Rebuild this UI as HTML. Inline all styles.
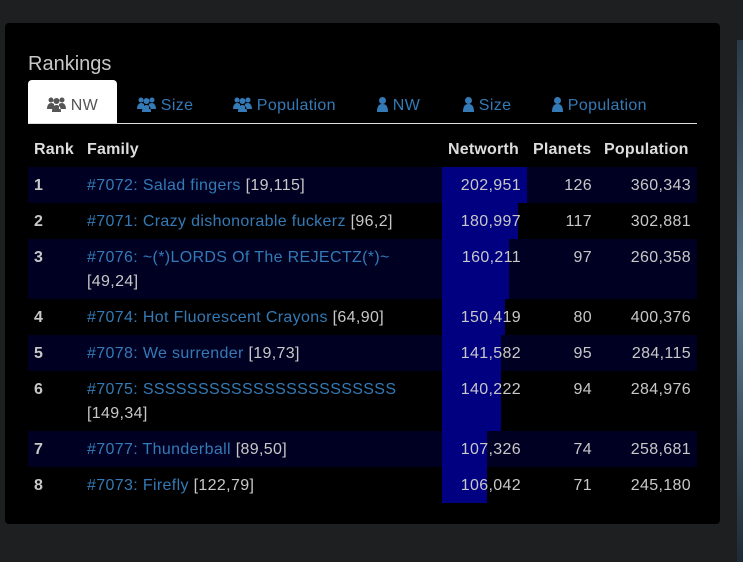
<!DOCTYPE html><html><head><style>
body{margin:0;width:743px;height:562px;background:#1e1f20;font-family:"Liberation Sans",sans-serif;overflow:hidden;position:relative;letter-spacing:0.35px}
.strip{position:absolute;left:737px;top:40px;width:6px;height:522px;background:linear-gradient(#2a3a48,#5a7890,#1e2a34)}
.panel{position:absolute;left:5px;top:23px;width:715px;height:501px;background:#000;border-radius:4px}
h{position:absolute;left:28px;top:53px;font-size:20px;color:#c8c8c8;letter-spacing:0}
.tab{position:absolute;top:80px;height:44px;font-size:16px;line-height:51px;color:#337ab7}
.act{left:28px;width:89px;background:#fff;border-radius:4px 4px 0 0;color:#555;text-align:center}
.line{position:absolute;left:28px;top:123px;width:669px;height:1px;background:#ddd}
.th{position:absolute;top:141px;font-size:16px;font-weight:bold;color:#ddd;letter-spacing:0.2px}
.row{position:absolute;left:28px;width:669px;font-size:16px;color:#c8c8c8;line-height:24px}
.row.s{background:#000022}
.bar{position:absolute;left:414px;top:0;bottom:0;background:#000080}
.c{position:absolute;top:7px}
.r{text-align:right}
a{color:#337ab7;text-decoration:none}
svg{vertical-align:-2px}
</style></head><body>
<div class="strip"></div>
<div class="panel"></div>
<h>Rankings</h>
<div class="tab act"><svg width="19" height="15" viewBox="0 0 19 15" fill="#555"><circle cx="4" cy="3" r="2.5"/><circle cx="15" cy="3" r="2.5"/><circle cx="9.5" cy="4" r="3"/><path d="M0 12c0-4 2-6 4-6s3 1 3 1v5z M19 12c0-4-2-6-4-6s-3 1-3 1v5z M5 15c0-5 2-7 4.5-7S14 10 14 15z"/></svg> NW</div>
<div class="tab" style="left:137px"><svg width="19" height="15" viewBox="0 0 19 15" fill="#337ab7"><circle cx="4" cy="3" r="2.5"/><circle cx="15" cy="3" r="2.5"/><circle cx="9.5" cy="4" r="3"/><path d="M0 12c0-4 2-6 4-6s3 1 3 1v5z M19 12c0-4-2-6-4-6s-3 1-3 1v5z M5 15c0-5 2-7 4.5-7S14 10 14 15z"/></svg> Size</div>
<div class="tab" style="left:233px"><svg width="19" height="15" viewBox="0 0 19 15" fill="#337ab7"><circle cx="4" cy="3" r="2.5"/><circle cx="15" cy="3" r="2.5"/><circle cx="9.5" cy="4" r="3"/><path d="M0 12c0-4 2-6 4-6s3 1 3 1v5z M19 12c0-4-2-6-4-6s-3 1-3 1v5z M5 15c0-5 2-7 4.5-7S14 10 14 15z"/></svg> Population</div>
<div class="tab" style="left:377px"><svg width="11" height="15" viewBox="0 0 11 15" fill="#337ab7"><circle cx="5.5" cy="3.5" r="3.5"/><path d="M0 15c0-6 2-8 5.5-8S11 9 11 15z"/></svg> NW</div>
<div class="tab" style="left:463px"><svg width="11" height="15" viewBox="0 0 11 15" fill="#337ab7"><circle cx="5.5" cy="3.5" r="3.5"/><path d="M0 15c0-6 2-8 5.5-8S11 9 11 15z"/></svg> Size</div>
<div class="tab" style="left:552px"><svg width="11" height="15" viewBox="0 0 11 15" fill="#337ab7"><circle cx="5.5" cy="3.5" r="3.5"/><path d="M0 15c0-6 2-8 5.5-8S11 9 11 15z"/></svg> Population</div>
<div class="line"></div>
<div class="th" style="left:34px">Rank</div>
<div class="th" style="left:87px">Family</div>
<div class="th" style="left:448px">Networth</div>
<div class="th" style="left:533px">Planets</div>
<div class="th" style="left:604px">Population</div>

<div class="row s" style="top:167px;height:36px"><div class="bar" style="width:85px"></div><div class="c" style="left:6px;font-weight:bold">1</div><div class="c" style="left:59px"><a>#7072: Salad fingers</a> [19,115]</div><div class="c r" style="right:176px">202,951</div><div class="c r" style="right:105px">126</div><div class="c r" style="right:6px">360,343</div></div>
<div class="row" style="top:203px;height:36px"><div class="bar" style="width:76px"></div><div class="c" style="left:6px;font-weight:bold">2</div><div class="c" style="left:59px"><a>#7071: Crazy dishonorable fuckerz</a> [96,2]</div><div class="c r" style="right:176px">180,997</div><div class="c r" style="right:105px">117</div><div class="c r" style="right:6px">302,881</div></div>
<div class="row s" style="top:239px;height:60px"><div class="bar" style="width:67px"></div><div class="c" style="left:6px;font-weight:bold">3</div><div class="c" style="left:59px"><a>#7076: ~(*)LORDS Of The REJECTZ(*)~</a><br>[49,24]</div><div class="c r" style="right:176px">160,211</div><div class="c r" style="right:105px">97</div><div class="c r" style="right:6px">260,358</div></div>
<div class="row" style="top:299px;height:36px"><div class="bar" style="width:63px"></div><div class="c" style="left:6px;font-weight:bold">4</div><div class="c" style="left:59px"><a>#7074: Hot Fluorescent Crayons</a> [64,90]</div><div class="c r" style="right:176px">150,419</div><div class="c r" style="right:105px">80</div><div class="c r" style="right:6px">400,376</div></div>
<div class="row s" style="top:335px;height:36px"><div class="bar" style="width:59px"></div><div class="c" style="left:6px;font-weight:bold">5</div><div class="c" style="left:59px"><a>#7078: We surrender</a> [19,73]</div><div class="c r" style="right:176px">141,582</div><div class="c r" style="right:105px">95</div><div class="c r" style="right:6px">284,115</div></div>
<div class="row" style="top:371px;height:60px"><div class="bar" style="width:59px"></div><div class="c" style="left:6px;font-weight:bold">6</div><div class="c" style="left:59px"><a>#7075: SSSSSSSSSSSSSSSSSSSSSSS</a><br>[149,34]</div><div class="c r" style="right:176px">140,222</div><div class="c r" style="right:105px">94</div><div class="c r" style="right:6px">284,976</div></div>
<div class="row s" style="top:431px;height:36px"><div class="bar" style="width:45px"></div><div class="c" style="left:6px;font-weight:bold">7</div><div class="c" style="left:59px"><a>#7077: Thunderball</a> [89,50]</div><div class="c r" style="right:176px">107,326</div><div class="c r" style="right:105px">74</div><div class="c r" style="right:6px">258,681</div></div>
<div class="row" style="top:467px;height:36px"><div class="bar" style="width:45px"></div><div class="c" style="left:6px;font-weight:bold">8</div><div class="c" style="left:59px"><a>#7073: Firefly</a> [122,79]</div><div class="c r" style="right:176px">106,042</div><div class="c r" style="right:105px">71</div><div class="c r" style="right:6px">245,180</div></div>
</body></html>
